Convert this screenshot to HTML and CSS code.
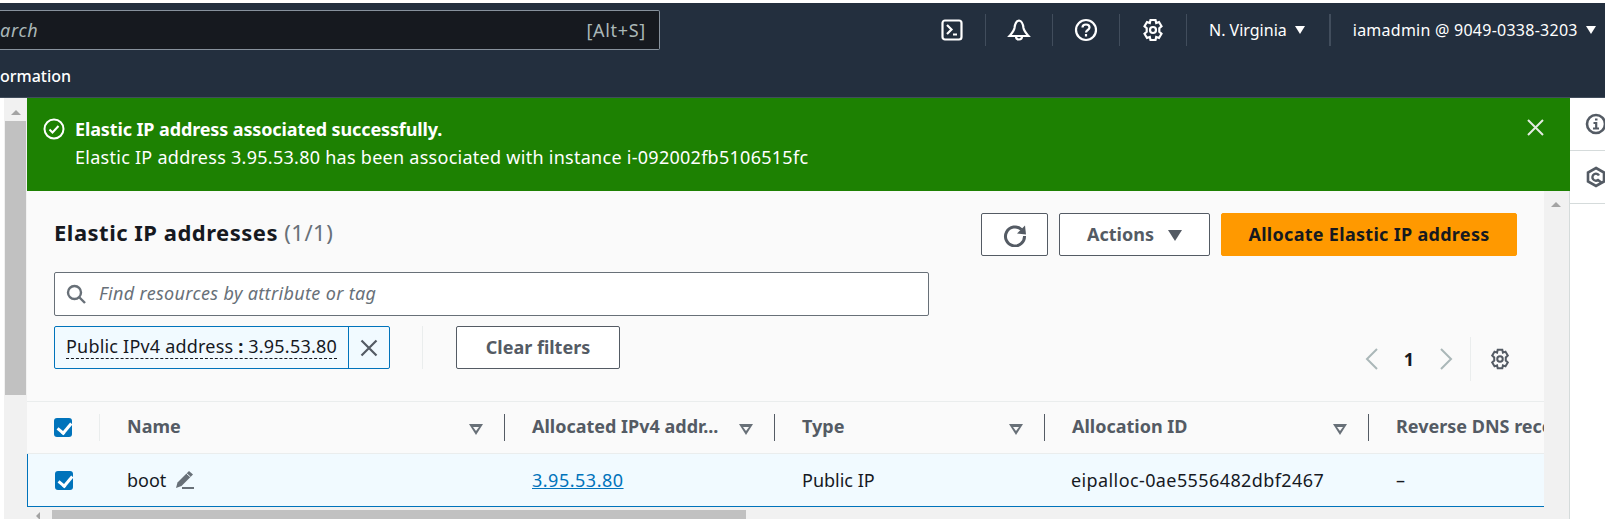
FILE: index.html
```html
<!DOCTYPE html>
<html>
<head>
    <meta charset="utf-8">
    <title>Elastic IP addresses</title>
    <link rel="stylesheet" href="styles.css">
</head>
<body>

<!-- top nav -->
<header class="nav">
    <div class="nav_top">
        <div class="search">
            <span class="search_text">arch</span>
            <span class="search_key">[Alt+S]</span>
        </div>
        <div class="nav_tools">
            <span class="tool tool_first">
                <svg width="24" height="24" viewBox="0 0 24 24" fill="none" stroke="#fff" stroke-width="2.200"><rect x="2.500" y="2.500" width="19" height="19" rx="2.500"/><path d="M7 7l4.500 4.500L7 16M13 16.500h4"/></svg>
            </span>
            <span class="tool">
                <svg width="24" height="24" viewBox="0 0 24 24" fill="none" stroke="#fff" stroke-width="2.200"><path d="M12 2.500C9 3 8 6 7.500 10 7 13 5 15 2.500 18h19c-2.500-3-4.500-5-5-8C16 6 15 3 12 2.500z"/><path d="M9 18.500a3 3 0 0 0 6 0"/></svg>
            </span>
            <span class="tool">
                <svg width="24" height="24" viewBox="0 0 24 24" fill="none" stroke="#fff" stroke-width="2.200"><circle cx="12" cy="12" r="10"/><path d="M8.500 9.500C8.500 7.500 10 6.500 12 6.500s3.500 1.200 3.500 3c0 2.500-3.500 2.500-3.500 5"/><path d="M12 16v2.500"/></svg>
            </span>
            <span class="tool">
                <svg width="24" height="24" viewBox="0 0 24 24" fill="none" stroke="#fff" stroke-width="2.200"><path d="M9.500 2h5l.7 3 2.800-1 2.500 4.200-2.200 2.100v3.400l2.200 2.100-2.500 4.200-2.800-1-.7 3h-5l-.7-3-2.800 1-2.500-4.200 2.200-2.100v-3.400L3.500 8.200 6 4l2.800 1z"/><circle cx="12" cy="12" r="3"/></svg>
            </span>
            <span class="tool tool_text">N. Virginia <i class="caret"></i></span>
            <span class="tool tool_text tool_user">iamadmin @ 9049-0338-3203 <i class="caret"></i></span>
        </div>
    </div>
    <div class="nav_bottom">ormation</div>
</header>

<div class="page">
    <div class="scroll_left">
        <i class="arrow_up"></i>
        <div class="thumb_left"></div>
    </div>

    <main class="main">
        <!-- flash message -->
        <section class="flash">
            <svg class="flash_icon" width="22" height="22" viewBox="0 0 22 22" fill="none" stroke="#fff" stroke-width="2"><circle cx="11" cy="11" r="9.500"/><path d="M6.500 11.500l3 3 6-6.500"/></svg>
            <div class="flash_text">
                <b>Elastic IP address associated successfully.</b>
                <div>Elastic IP address 3.95.53.80 has been associated with instance i-092002fb5106515fc</div>
            </div>
            <svg class="flash_close" width="20" height="20" viewBox="0 0 20 20" fill="none" stroke="#e4ebe0" stroke-width="2"><path d="M2 2l15 15M17 2L2 17"/></svg>
        </section>

        <div class="content">
            <div class="panel">
                <div class="title_row">
                    <h1>Elastic IP addresses <span class="count">(1/1)</span></h1>
                    <div class="actions">
                        <button class="btn btn_icon">
                            <svg width="24" height="24" viewBox="0 0 24 24" fill="none" stroke="#545b64" stroke-width="3"><path d="M18.500 6.500A9.500 9.500 0 1 0 21.500 13"/><path d="M22 2.500l1 9-9-1z" fill="#545b64" stroke="none"/></svg>
                        </button>
                        <button class="btn btn_actions">Actions <i class="caret caret_grey"></i></button>
                        <button class="btn btn_primary">Allocate Elastic IP address</button>
                    </div>
                </div>

                <div class="finder">
                    <svg width="20" height="20" viewBox="0 0 20 20" fill="none" stroke="#687078" stroke-width="2.400"><circle cx="8.500" cy="8.500" r="6.500"/><path d="M13 13l6 6"/></svg>
                    <span class="finder_text">Find resources by attribute or tag</span>
                </div>

                <div class="filter_row">
                    <div class="token">
                        <span class="token_label"><span class="token_text">Public IPv4 address <b>:</b> 3.95.53.80</span></span>
                        <span class="token_x">
                            <svg width="18" height="18" viewBox="0 0 18 18" fill="none" stroke="#545b64" stroke-width="2.200"><path d="M1.500 1.500l15 15M16.500 1.500l-15 15"/></svg>
                        </span>
                    </div>
                    <span class="filter_sep"></span>
                    <button class="btn btn_clear">Clear filters</button>
                    <div class="pager">
                        <svg width="14" height="22" viewBox="0 0 14 22" fill="none" stroke="#aab7b8" stroke-width="2"><path d="M12 1L2 11l10 10"/></svg>
                        <b>1</b>
                        <svg width="14" height="22" viewBox="0 0 14 22" fill="none" stroke="#aab7b8" stroke-width="2"><path d="M2 1l10 10L2 21"/></svg>
                        <span class="pager_sep"></span>
                        <svg width="22" height="22" viewBox="0 0 24 24" fill="none" stroke="#545b64" stroke-width="2.200"><path d="M9.500 2h5l.7 3 2.800-1 2.500 4.200-2.200 2.100v3.400l2.200 2.100-2.500 4.200-2.800-1-.7 3h-5l-.7-3-2.800 1-2.500-4.200 2.200-2.100v-3.400L3.500 8.200 6 4l2.800 1z"/><circle cx="12" cy="12" r="3"/></svg>
                    </div>
                </div>

                <div class="table">
                    <div class="tr th">
                        <div class="td td_check"><i class="check"></i></div>
                        <div class="td">Name <i class="sort"></i></div>
                        <div class="td">Allocated IPv4 addr... <i class="sort"></i></div>
                        <div class="td">Type <i class="sort"></i></div>
                        <div class="td">Allocation ID <i class="sort"></i></div>
                        <div class="td td_last">Reverse DNS record</div>
                    </div>
                    <div class="tr selected">
                        <div class="td td_check"><i class="check"></i></div>
                        <div class="td">
                            <span class="name_cell">boot
                                <svg width="20" height="20" viewBox="0 0 20 20" fill="#687078"><path d="M15 1l4 3.500L7.500 16 2 18l1.500-5.500z"/><path d="M12.500 3.500l4 3.500" stroke="#f1faff" stroke-width="1"/><rect x="8" y="17" width="12" height="2"/></svg>
                            </span>
                        </div>
                        <div class="td"><a class="ip_link" href="#">3.95.53.80</a></div>
                        <div class="td">Public IP</div>
                        <div class="td td_id">eipalloc-0ae5556482dbf2467</div>
                        <div class="td td_last">–</div>
                    </div>
                </div>
            </div>

            <div class="scroll_right"><i class="arrow_up"></i></div>
        </div>

        <div class="scroll_bottom">
            <i class="arrow_left"></i>
            <div class="thumb_bottom"></div>
        </div>
    </main>

    <aside class="side">
        <span class="side_item">
            <svg width="22" height="22" viewBox="0 0 22 22" fill="none" stroke="#545b64" stroke-width="2.600"><circle cx="11" cy="11" r="9"/><path d="M8.500 10h2.700v5M8 15.500h6M10 6.500h2.500" stroke-width="2.200"/></svg>
        </span>
        <span class="side_item">
            <svg width="22" height="22" viewBox="0 0 22 22" fill="none" stroke="#545b64" stroke-width="2.600"><path d="M11 2l8 4.500v9L11 20l-8-4.500v-9z"/><path d="M14 9.500a3.500 3.500 0 1 0-1 4.500l4 3" stroke-width="2.400"/></svg>
        </span>
    </aside>
</div>

</body>
</html>
```

FILE: styles.css
```css
* {
    box-sizing: border-box;
}

html, body {
    margin: 0;
    height: 519px;
    overflow: hidden;
}

body {
    background-color: #fff;
    color: #16191f;
    font-family: "Noto Sans", sans-serif;
    font-size: 18px;
    padding-top: 3px;
}

/* nav */
.nav {
    height: 95px;
    background-color: #232f3e;
    color: #fff;
    border-bottom: 1px solid #414d5c;
}

.nav_top {
    height: 60px;
    display: flex;
    align-items: flex-start;
    padding-top: 7px;
}

.search {
    width: 660px;
    height: 40px;
    background-color: #16191f;
    border: 1px solid #87919c;
    border-left: 0;
    border-radius: 0 2px 2px 0;
    display: flex;
    align-items: center;
    justify-content: space-between;
    padding-right: 13px;
    color: #aab7b8;
    letter-spacing: 0.7px;
}

.search_text {
    font-style: italic;
}

.nav_tools {
    display: flex;
    align-items: center;
    height: 40px;
    margin-left: 258px;
}

.tool {
    height: 32px;
    display: flex;
    align-items: center;
    justify-content: center;
    width: 67px;
    border-left: 1px solid #414d5c;
}

.tool_first {
    border-left: 0;
}

.tool_text {
    width: auto;
    gap: 8px;
    padding: 0 24px 0 22px;
    font-size: 16px;
}

.tool_user {
    border-left: 2px solid #414d5c;
    padding-right: 0;
    white-space: nowrap;
    letter-spacing: 0.25px;
}

.caret {
    display: inline-block;
    width: 0;
    height: 0;
    border-left: 5.5px solid transparent;
    border-right: 5.5px solid transparent;
    border-top: 8px solid #fff;
}

.caret_grey {
    border-top: 11px solid #545b64;
    border-left-width: 7px;
    border-right-width: 7px;
    margin: 3px 0 0 14px;
}

.nav_bottom {
    font-size: 16px;
    font-weight: 500;
    line-height: 20px;
    padding-top: 3px;
}

/* page */
.page {
    display: flex;
    height: 421px;
}

.scroll_left {
    width: 27px;
    background-color: #f1f1f1;
    border-left: 4px solid #fff;
    padding-top: 12px;
    display: flex;
    flex-direction: column;
    align-items: center;
    flex: none;
}

.thumb_left {
    width: 21px;
    height: 274px;
    margin-top: 6px;
    background-color: #c1c1c1;
    flex: none;
}

.arrow_up {
    display: block;
    width: 0;
    height: 0;
    border-left: 5px solid transparent;
    border-right: 5px solid transparent;
    border-bottom: 5px solid #a3a3a3;
}

.arrow_left {
    display: block;
    width: 0;
    height: 0;
    border-top: 4px solid transparent;
    border-bottom: 4px solid transparent;
    border-right: 4px solid #a3a3a3;
    margin: 5px 12px 0 9px;
}

.main {
    width: 1543px;
    flex: none;
    display: flex;
    flex-direction: column;
}

.flash {
    height: 93px;
    background-color: #1d8102;
    color: #fff;
    display: flex;
    align-items: flex-start;
    padding: 19px 0 0 16px;
    position: relative;
}

.flash_icon {
    margin: 1px 10px 0 0;
}

.flash_text {
    line-height: 28px;
    flex: 1;
    margin-top: -2px;
    letter-spacing: 0.27px;
}

.flash_text b {
    letter-spacing: -0.12px;
}

.flash_close {
    margin: 1px 24px 0 0;
}

.content {
    flex: 1;
    display: flex;
    background-color: #fafafa;
    min-height: 0;
}

.panel {
    width: 1517px;
    flex: none;
    padding-top: 22px;
    overflow: hidden;
}

.scroll_right {
    width: 26px;
    flex: none;
    background-color: #f1f1f1;
    border-right: 1px solid #d5dbdb;
    padding: 11px 0 0 7px;
}

.title_row {
    display: flex;
    justify-content: space-between;
    align-items: center;
    padding: 0 27px;
    height: 43px;
}

h1 {
    margin: -5px 0 0;
    font-size: 22px;
    font-weight: 700;
    letter-spacing: 0.5px;
}

.count {
    font-weight: 400;
    color: #687078;
}

.actions {
    display: flex;
    gap: 11px;
}

.btn {
    height: 43px;
    background-color: #fff;
    border: 1px solid #545b64;
    border-radius: 2px;
    color: #545b64;
    font-family: inherit;
    font-size: 18px;
    font-weight: 700;
    display: flex;
    align-items: center;
    justify-content: center;
    padding: 0;
}

.btn_icon {
    width: 67px;
}

.btn_actions {
    width: 151px;
    padding-bottom: 2px;
}

.btn_primary {
    width: 296px;
    background-color: #ff9900;
    border-color: #ff9900;
    color: #16191f;
    letter-spacing: 0.3px;
    padding-bottom: 2px;
}

.finder {
    width: 875px;
    height: 44px;
    margin: 16px 0 0 27px;
    background-color: #fff;
    border: 1px solid #687078;
    border-radius: 2px;
    display: flex;
    align-items: center;
    gap: 13px;
    padding-left: 11px;
    color: #687078;
    font-style: italic;
    letter-spacing: 0.35px;
}

.finder_text {
    padding-bottom: 2px;
}

.filter_row {
    display: flex;
    align-items: flex-start;
    height: 75px;
    margin-top: 10px;
    padding: 0 27px;
}

.token {
    display: flex;
    height: 43px;
    width: 336px;
    background-color: #f1faff;
    border: 1px solid #0073bb;
    border-radius: 2px;
}

.token_label {
    flex: 1;
    padding: 7px 0 0 11px;
    white-space: nowrap;
    letter-spacing: 0.2px;
}

.token_text {
    border-bottom: 1px dashed #16191f;
}

.token_x {
    width: 41px;
    border-left: 1px solid #0073bb;
    display: flex;
    align-items: center;
    justify-content: center;
}

.filter_sep {
    width: 1px;
    height: 43px;
    background-color: #eaeded;
    margin: 0 33px 0 32px;
}

.btn_clear {
    width: 164px;
    padding-bottom: 2px;
}

.pager {
    margin-left: auto;
    display: flex;
    align-items: center;
    height: 44px;
    margin-top: 11px;
    color: #16191f;
    margin-right: 6px;
}

.pager b {
    width: 60px;
    text-align: center;
}

.pager_sep {
    width: 1px;
    height: 44px;
    background-color: #eaeded;
    margin: 0 18px 0 17px;
}

.table {
    border-top: 1px solid #eaeded;
    width: 1517px;
}

.tr {
    display: grid;
    grid-template-columns: 72px 405px 270px 270px 324px 176px;
    height: 53px;
}

.th {
    font-weight: 700;
    color: #545b64;
    border-bottom: 1px solid #eaeded;
    padding-top: 12px;
    height: 52px;
}

.th .td {
    height: 27px;
    padding-bottom: 3px;
    border-left: 1px solid #545b64;
}

.th .td_check {
    border-left: 0;
    padding-bottom: 0;
}

.th .td:nth-child(2) {
    border-left: 1px solid #eaeded;
}

.td {
    display: flex;
    align-items: center;
    justify-content: space-between;
    padding: 0 21px 0 27px;
    white-space: nowrap;
    min-width: 0;
}

.td_check {
    padding-left: 27px;
    justify-content: flex-start;
}

.td_last {
    justify-content: flex-start;
    overflow: hidden;
    padding-right: 0;
}

.td_id {
    letter-spacing: 0.4px;
}

.check {
    width: 18px;
    height: 19px;
    background-color: #0073bb;
    border-radius: 3px;
    display: block;
    position: relative;
}

.check::after {
    content: "";
    position: absolute;
    left: 6px;
    top: 2px;
    width: 6px;
    height: 11px;
    border-right: 3px solid #fff;
    border-bottom: 3px solid #fff;
    transform: rotate(40deg);
}

.sort {
    width: 0;
    height: 0;
    border-left: 7px solid transparent;
    border-right: 7px solid transparent;
    border-top: 11px solid #687078;
    position: relative;
    flex: none;
    margin-top: 6px;
}

.sort::after {
    content: "";
    position: absolute;
    left: -3px;
    top: -8px;
    border-left: 3px solid transparent;
    border-right: 3px solid transparent;
    border-top: 4px solid #fafafa;
}

.selected {
    background-color: #f1faff;
    border-left: 1px solid #0073bb;
    border-bottom: 1px solid #0073bb;
    height: 53px;
    grid-template-columns: 72px 405px 270px 269px 325px 175px;
}

.name_cell {
    display: flex;
    align-items: center;
    gap: 8px;
}

.ip_link {
    color: #0073bb;
    letter-spacing: 0.5px;
}

.scroll_bottom {
    position: absolute;
    left: 27px;
    top: 507px;
    width: 1517px;
    height: 12px;
    background-color: #f1f1f1;
    display: flex;
}

.thumb_bottom {
    width: 694px;
    height: 9px;
    margin-top: 3px;
    background-color: #c1c1c1;
}

/* right tools */
.side {
    width: 35px;
    flex: none;
    background-color: #fff;
}

.side_item {
    display: block;
    height: 53px;
    padding: 15px 0 0 15px;
    border-bottom: 1px solid #d5dbdb;
}
```
